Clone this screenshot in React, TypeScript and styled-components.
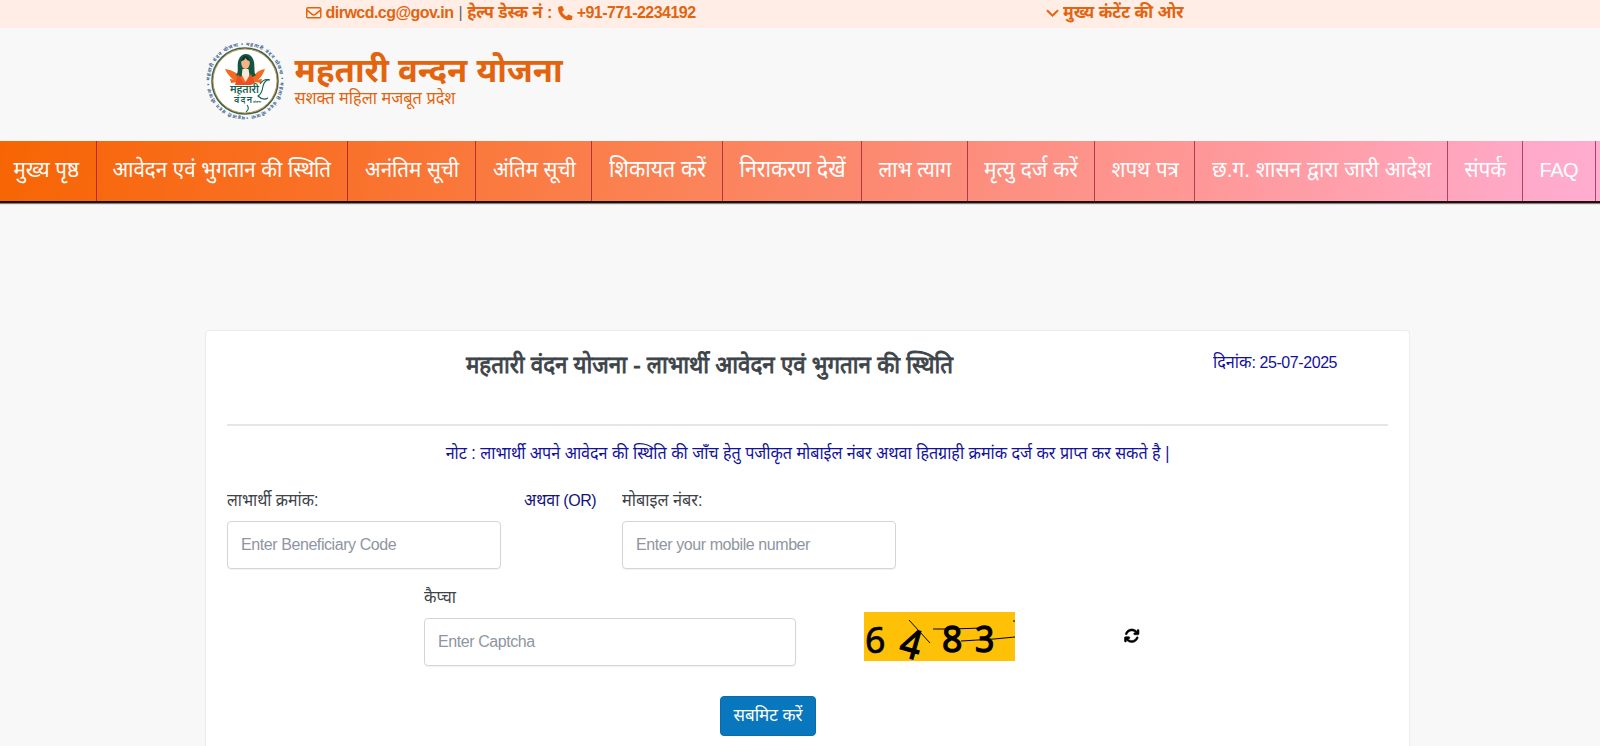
import React from 'react';
import styled, { createGlobalStyle } from 'styled-components';
import { FaRegEnvelope, FaPhone, FaChevronDown, FaArrowsRotate } from 'react-icons/fa6';

const Global = createGlobalStyle`
  * { box-sizing: border-box; }
  html, body { margin: 0; background: #f8f8f8; overflow: hidden; }
  body { font: 16px/20px "Liberation Sans", "Noto Sans", sans-serif; letter-spacing: -0.42px; color: #3d4449; }
`;

const Page = styled.div`
  width: 1600px;
  height: 746px;
  overflow: hidden;
`;

/* Devanagari run: sized apart from Latin text, stretched from its baseline. */
const Hindi = styled.span<{ $size: number; $stretch?: number; $bold?: number }>`
  display: inline-block;
  font-size: ${(p) => p.$size}px;
  line-height: 1;
  letter-spacing: 0;
  white-space: nowrap;
  transform: scaleY(${(p) => p.$stretch ?? 1});
  transform-origin: 0 85%;
  -webkit-text-stroke: ${(p) => p.$bold ?? 0}px currentColor;
`;

const TopBar = styled.div`
  display: flex;
  height: 28px;
  background: #ffede6;
  color: #e2640f;
  font-weight: 700;
  line-height: 26px;
  letter-spacing: -0.52px;
  white-space: nowrap;
`;
const Contact = styled.div`
  display: flex;
  align-items: baseline;
  width: 740px;
  margin-left: 306px;
  svg { flex: none; align-self: center; margin-top: -2px; }
`;
const Email = styled.span`margin-left: 4px; width: 128px;`;
const Bar = styled.span`margin: 0 5px; font-weight: 400; color: #666;`;
const Phone = styled.span`margin-left: 4px;`;
const HelpDesk = styled.span`margin-right: 4px; width: 87px;`;
const SkipLink = styled.div`
  svg { margin: 0 4px 0 0; vertical-align: -1px; stroke: currentColor; stroke-width: 24; }
`;

const Header = styled.header`
  display: flex;
  height: 113px;
  padding: 13px 0 0 205px;
  color: #e2640f;
  letter-spacing: 0;
`;
const Brand = styled.div`margin-left: 9.5px;`;
const BrandName = styled.h1`
  margin: 0;
  padding-top: 13px;
  height: 46px;
  font-size: 32.9px;
  line-height: 34px;
  white-space: nowrap;
`;
const Tagline = styled.div`
  font-size: 16.3px;
  line-height: 23px;
`;

const Nav = styled.nav`
  display: flex;
  height: 62px;
  border-bottom: 2px solid #1c1114;
  box-shadow: 0 1px 1px #8a8078;
  background: linear-gradient(100deg, #f76503 0%, #f97027 20%, #fb8152 40%, #fc8b76 57%, #fe9795 74%, #ffa1b0 86%, #ffaacb 96%, #ffadd0 100%);
`;
const NavItem = styled.a<{ $w: number; $pad: number }>`
  flex: none;
  width: ${(p) => p.$w}px;
  padding: 0 0 0 ${(p) => p.$pad}px;
  border-right: 1px solid rgba(150, 12, 50, 0.68);
  color: #fff;
  font-size: 20px;
  line-height: 58px;
`;

const Card = styled.main`
  width: 1205px;
  height: 440px;
  margin: 127px 0 0 205px;
  padding: 0 21px;
  border: 1px solid #ececec;
  border-radius: 4px;
  background: #fff;
`;
const CardHead = styled.div`
  display: flex;
  height: 93px;
  align-items: flex-start;
`;
const Title = styled.h2`
  margin: 0;
  padding: 22px 0 0 239px;
  width: 986px;
  font-size: 21px;
  font-weight: 400;
  line-height: 26px;
  color: #3d4449;
`;
const DateText = styled.div`
  padding-top: 22px;
  color: #12129c;
  white-space: nowrap;
`;
const Rule = styled.hr`
  margin: 0;
  height: 2px;
  border: 0;
  background: #e5e6e7;
`;
const Note = styled.p`
  margin: 18px 0 0;
  height: 47px;
  text-align: center;
  color: #12129c;
`;
const FieldRow = styled.div`
  display: flex;
  height: 97px;
`;
const Field = styled.label<{ $w: number }>`
  display: flex;
  flex-direction: column;
  width: ${(p) => p.$w}px;
`;
const Label = styled.span`height: 30px;`;
const Input = styled.input`
  width: 100%;
  height: 48px;
  padding: 0 13px;
  border: 1px solid #d3d6d9;
  border-radius: 4px;
  background: #fff;
  box-shadow: 0 1px 1px rgba(0, 0, 0, 0.05);
  font: inherit;
  letter-spacing: inherit;
  &::placeholder { color: #8f95a1; opacity: 1; }
`;
const Or = styled.div`
  width: 98px;
  margin: 0 0 0 23px;
  color: #12127c;
`;
const CaptchaRow = styled(FieldRow)`
  height: 108px;
  padding-left: 197px;
`;
const CaptchaImage = styled.svg`
  width: 151px;
  height: 49px;
  margin: 24px 109px 0 68px;
  background: #fec107;
`;
const Refresh = styled.button`
  display: flex;
  padding: 0;
  margin-top: 40px;
  height: 16px;
  border: 0;
  background: none;
  color: #000;
  svg { stroke: #000; stroke-width: 18; }
`;
const Submit = styled.button`
  display: block;
  width: 96px;
  height: 40px;
  margin-left: 493px;
  padding: 0;
  border: 1px solid #0a6cab;
  border-radius: 4px;
  background: #0877bd;
  color: #fff;
  font: inherit;
`;

const navItems: [string, number, number, number][] = [
  ['मुख्य पृष्ठ', 96.5, 13.5, 20.5],
  ['आवेदन एवं भुगतान की स्थिति', 251.5, 16, 20.5],
  ['अनंतिम सूची', 128, 17, 20.5],
  ['अंतिम सूची', 116, 17, 20.5],
  ['शिकायत करें', 131, 17, 21.2],
  ['निराकरण देखें', 138.5, 16.5, 21.2],
  ['लाभ त्याग', 106, 17, 20.2],
  ['मृत्यु दर्ज करें', 127.5, 16.5, 21],
  ['शपथ पत्र', 100, 16.5, 20.5],
  ['छ.ग. शासन द्वारा जारी आदेश', 253, 17, 20.9],
  ['संपर्क', 75, 16.5, 20.8],
];

function Logo() {
  return (
    <svg width="80" height="80" viewBox="0 0 80 80">
      <defs>
        <path id="ring" d="M40 75.3a35.3 35.3 0 1 1 .1 0" />
      </defs>
      <circle cx="40" cy="40" r="33" fill="#fff" stroke="#3f6248" strokeWidth="1.6" />
      <circle cx="40" cy="40" r="32" fill="none" stroke="#b48a47" strokeWidth=".9" />
      <text fontSize="5" fontWeight="700" fill="#35618f" fontFamily="Noto Sans">
        <textPath href="#ring" textLength="220">
          महतारी वंदन योजना • महतारी वंदन योजना • महतारी वंदन योजना • महतारी वंदन योजना •
        </textPath>
      </text>
      <g fill="#f36a21">
        <path d="M39 43C31 41 24 37 20 28c7 1 13 4 15 8-2-6-2-10 0-14l6 9 7-9c2 5 2 9 0 14 3-5 7-7 12-8-3 9-9 14-17 15z" />
        <path d="M25 38c3 0 6 1 8 3l-7 1zM57 38c-3 0-6 1-8 3l7 1z" />
      </g>
      <path d="M31 34c3-3 1-8 2-13 1-5 4-8 8-8s7 3 8 8c1 5-1 10 2 13-3 3-6 2-8 0h-5c-2 2-4 2-7 0z" fill="#13563f" />
      <ellipse cx="40.5" cy="22" rx="4.3" ry="6" fill="#f3b489" />
      <path d="M36 20q1-5 4.5-5t4.5 5q-3 0-4.5-3-1 3-4.5 3z" fill="#13382d" />
      <path d="M37.5 28h6l1 6-3.7 7-4-7z" fill="#fbe9d8" />
      <path d="M30 44l3-11 5 8 2 1 6-9 4 9-4 2z" fill="#ee4f21" />
      <g fill="#17604b" fontFamily="Noto Sans" fontWeight="600">
        <text x="25" y="52" fontSize="10.5" textLength="29">महतारी</text>
        <text x="29" y="62" fontSize="9" textLength="18">वंदन</text>
        <text x="48" y="61.5" fontSize="3.2">योजना</text>
      </g>
      <path d="M55 43q4-6 10-4q-5-1-7 6-1 8-5 10 5 5 10 2M42 64q3 4-1 7" fill="none" stroke="#17604b" strokeWidth="1.1" />
    </svg>
  );
}

export default function App() {
  return (
    <Page>
      <Global />
      <TopBar>
        <Contact>
          <FaRegEnvelope size={15.5} />
          <Email>dirwcd.cg@gov.in</Email>
          <Bar>|</Bar>
          <HelpDesk><Hindi $size={16.3} $stretch={1.05}>हेल्प डेस्क नं :</Hindi></HelpDesk>
          <FaPhone size={14.5} />
          <Phone>+91-771-2234192</Phone>
        </Contact>
        <SkipLink>
          <FaChevronDown size={13} />
          <Hindi $size={16.4} $stretch={1.05}>मुख्य कंटेंट की ओर</Hindi>
        </SkipLink>
      </TopBar>
      <Header>
        <Logo />
        <Brand>
          <BrandName>महतारी वन्दन योजना</BrandName>
          <Tagline><Hindi $size={16.3} $stretch={1.06}>सशक्त महिला मजबूत प्रदेश</Hindi></Tagline>
        </Brand>
      </Header>
      <Nav>
        {navItems.map(([text, w, pad, size]) => (
          <NavItem key={text} $w={w} $pad={pad}>
            <Hindi $size={size} $stretch={1.1}>{text}</Hindi>
          </NavItem>
        ))}
        <NavItem $w={72.5} $pad={16.5}>FAQ</NavItem>
      </Nav>
      <Card>
        <CardHead>
          <Title><Hindi $size={22.3} $stretch={1.06} $bold={0.8}>महतारी वंदन योजना - लाभार्थी आवेदन एवं भुगतान की स्थिति</Hindi></Title>
          <DateText><Hindi $size={16.2} $stretch={1.08}>दिनांक</Hindi>: 25-07-2025</DateText>
        </CardHead>
        <Rule />
        <Note>
          <Hindi $size={16.1} $stretch={1.1}>
            नोट : लाभार्थी अपने आवेदन की स्थिति की जाँच हेतु पजीकृत मोबाईल नंबर अथवा हितग्राही क्रमांक दर्ज कर प्राप्त कर सकते है |
          </Hindi>
        </Note>
        <FieldRow>
          <Field $w={274}>
            <Label><Hindi $size={15.9} $stretch={1.1}>लाभार्थी क्रमांक:</Hindi></Label>
            <Input placeholder="Enter Beneficiary Code" />
          </Field>
          <Or><Hindi $size={15.9} $stretch={1.1}>अथवा</Hindi> (OR)</Or>
          <Field $w={274}>
            <Label><Hindi $size={16.3} $stretch={1.1}>मोबाइल नंबर:</Hindi></Label>
            <Input placeholder="Enter your mobile number" />
          </Field>
        </FieldRow>
        <CaptchaRow>
          <Field $w={372}>
            <Label><Hindi $size={16.2} $stretch={1.1}>कैप्चा</Hindi></Label>
            <Input placeholder="Enter Captcha" />
          </Field>
          <CaptchaImage viewBox="0 0 151 49">
            <g fontFamily="Noto Sans" fontSize="37" stroke="#000">
              <text x="1" y="40.5" textLength="20" lengthAdjust="spacingAndGlyphs" strokeWidth=".7">6</text>
              <text x="-10" y="14" transform="translate(47 32) rotate(16)" strokeWidth="1.3" fontSize="40" textLength="20" lengthAdjust="spacingAndGlyphs">4</text>
              <text x="78" y="40" strokeWidth="1.3" textLength="20" lengthAdjust="spacingAndGlyphs">8</text>
              <text x="111" y="40" strokeWidth="1.3" textLength="19" lengthAdjust="spacingAndGlyphs">3</text>
            </g>
            <path d="M45 8L66 31M69 17L88 17 118 16M97 29L130 27 151 25M149 9h2" fill="none" stroke="#000" />
          </CaptchaImage>
          <Refresh aria-label="Refresh"><FaArrowsRotate size={15.5} /></Refresh>
        </CaptchaRow>
        <Submit><Hindi $size={17} $stretch={1.05}>सबमिट करें</Hindi></Submit>
      </Card>
    </Page>
  );
}
